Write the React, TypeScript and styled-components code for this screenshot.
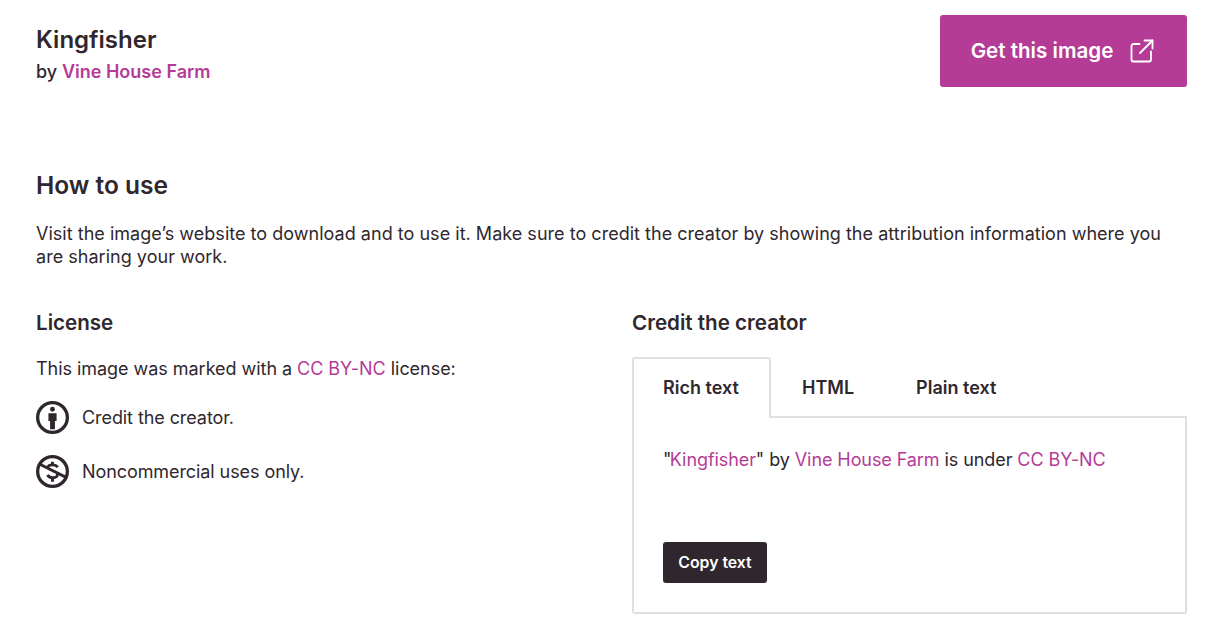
import React from "react";
import styled, { createGlobalStyle } from "styled-components";

const Global = createGlobalStyle`
  html, body { margin: 0; padding: 0; background: #fff; }
  body { font-family: Inter, "Liberation Sans", sans-serif; color: #30272e; }
  a { color: #b53c96; text-decoration: none; }
`;
const Page = styled.div`
  width: 1220px; height: 636px; box-sizing: border-box; padding: 15px 33px 0 36px; overflow: hidden;
`;
const Header = styled.header`
  display: flex; justify-content: space-between; align-items: flex-start; height: 72px;
`;
const TitleBlock = styled.div`padding-top: 10px;`;
const Title = styled.h1`margin: 0; font-size: 24px; line-height: 30px; font-weight: 600;`;
const Byline = styled.div`
  margin-top: 5px; font-size: 18px; line-height: 24px; font-weight: 500;
  a { font-weight: 600; }
`;
const GetButton = styled.a`
  display: flex; align-items: center; justify-content: center; gap: 17px;
  width: 247px; height: 72px; background: #b53c96; border-radius: 3px;
  && { color: #fff; } font-size: 20.6px; font-weight: 600;
`;
const ButtonLabel = styled.span`
  margin: 0 0 2px -2px;
`;
const Heading = styled.h2`margin: 83px 0 0; font-size: 24.5px; line-height: 30px; font-weight: 600;`;
const Intro = styled.p`margin: 22px 0 0; font-size: 18px; line-height: 23.4px; letter-spacing: 0.026px;`;
const Columns = styled.div`
  display: grid; grid-template-columns: 1fr 555px; column-gap: 41px; margin-top: 41px;
`;
const SubHeading = styled.h3`margin: 0; font-size: 20.6px; line-height: 26px; font-weight: 600;`;
const LicenseLine = styled.p`margin: 19px 0 0; font-size: 18px; line-height: 27px; letter-spacing: -0.04px;`;
const TermList = styled.ul`
  list-style: none; margin: 19px 0 0; padding: 0; display: flex; flex-direction: column; gap: 20px;
`;
const Term = styled.li`
  display: flex; align-items: center; gap: 13px; font-size: 18px; line-height: 34px; height: 34px; letter-spacing: -0.08px;
`;
const Tabs = styled.div`margin-top: 21px;`;
const TabList = styled.div`
  display: flex; height: 61px; box-sizing: border-box;
`;
const ActiveTab = styled.div`
  display: flex; align-items: center; box-sizing: border-box; padding: 0 29px 2px;
  font-size: 18px; font-weight: 600; height: 61px; width: 139px;
  border: 2px solid #e0e0e0; border-bottom: none; border-radius: 3px 3px 0 0;
  background: #fff;
`;
const Tab = styled.div`
  display: flex; align-items: center; padding: 0 31px;
  font-size: 18px; font-weight: 600; height: 61px; box-sizing: border-box; margin-bottom: -2px;
`;
const TabLine = styled.div`
  display: flex; flex: 1; box-sizing: border-box; height: 61px; border-bottom: 2px solid #e0e0e0;
`;
const Panel = styled.div`
  box-sizing: border-box; height: 196px; padding: 28px 29px 0;
  border: 2px solid #e0e0e0; border-top: none; border-radius: 0 0 3px 3px;
`;
const CreditLine = styled.p`margin: 0; font-size: 18px; line-height: 27px; letter-spacing: -0.08px;`;
const OpenQuote = styled.span`margin-right: -1.5px;`;
const CopyButton = styled.button`
  display: block; margin-top: 69px; width: 104px; height: 41px; border: none; border-radius: 3px;
  background: #30272e; color: #fff; font-family: inherit; font-size: 15.8px; font-weight: 600; padding: 0;
`;

const ExternalIcon = () => (
  <svg width="24" height="24" viewBox="0 0 24 24" fill="none" stroke="#fff" strokeWidth="1.8" strokeLinecap="round" strokeLinejoin="round">
    <path d="M9.500 5H3.500a2 2 0 0 0-2 2v13.500a2 2 0 0 0 2 2H19a2 2 0 0 0 2-2v-8" />
    <path d="M10 14 22.500 1.500" />
    <path d="M14.500 1.500h8v8" />
  </svg>
);
const ByIcon = () => (
  <svg width="33" height="33" viewBox="0 0 34 34" fill="none">
    <circle cx="17" cy="17" r="15.300" stroke="#30272e" strokeWidth="3.400" />
    <circle cx="17" cy="8.500" r="2.500" fill="#30272e" />
    <path d="M12.800 12.500h8.400v8h-1.700v8.500h-5v-8.500h-1.700z" fill="#30272e" />
  </svg>
);
const NcIcon = () => (
  <svg width="33" height="33" viewBox="0 0 34 34" fill="none">
    <circle cx="17" cy="17" r="15.300" stroke="#30272e" strokeWidth="3.400" />
    <path d="M3 9 31 23" stroke="#30272e" strokeWidth="3" />
    <path d="M22.500 12.500c-1.200-1.500-3-2.300-5.300-2.300-2.900 0-4.900 1.300-4.900 3" stroke="#30272e" strokeWidth="3" />
    <path d="M12 20.500c.8 1.900 2.800 3 5.100 3 2.900 0 5-1.400 5-3.400 0-.5-.1-1-.4-1.400" stroke="#30272e" strokeWidth="3" />
    <path d="M17 7v4M17 23v4.500" stroke="#30272e" strokeWidth="3" />
  </svg>
);

export default function App() {
  return (
    <Page>
      <Global />
      <Header>
        <TitleBlock>
          <Title>Kingfisher</Title>
          <Byline>by <a href="#">Vine House Farm</a></Byline>
        </TitleBlock>
        <GetButton href="#"><ButtonLabel>Get this image</ButtonLabel> <ExternalIcon /></GetButton>
      </Header>
      <Heading>How to use</Heading>
      <Intro>
        Visit the image’s website to download and to use it. Make sure to credit the creator by showing the attribution information where you are sharing your work.
      </Intro>
      <Columns>
        <div>
          <SubHeading>License</SubHeading>
          <LicenseLine>This image was marked with a <a href="#">CC BY-NC</a> license:</LicenseLine>
          <TermList>
            <Term><ByIcon /> Credit the creator.</Term>
            <Term><NcIcon /> Noncommercial uses only.</Term>
          </TermList>
        </div>
        <div>
          <SubHeading>Credit the creator</SubHeading>
          <Tabs>
            <TabList>
              <ActiveTab>Rich text</ActiveTab>
              <TabLine>
                <Tab>HTML</Tab>
                <Tab>Plain text</Tab>
              </TabLine>
            </TabList>
            <Panel>
              <CreditLine>
                <OpenQuote>"</OpenQuote><a href="#">Kingfisher</a>" by <a href="#">Vine House Farm</a> is under <a href="#">CC BY-NC</a>
              </CreditLine>
              <CopyButton>Copy text</CopyButton>
            </Panel>
          </Tabs>
        </div>
      </Columns>
    </Page>
  );
}
